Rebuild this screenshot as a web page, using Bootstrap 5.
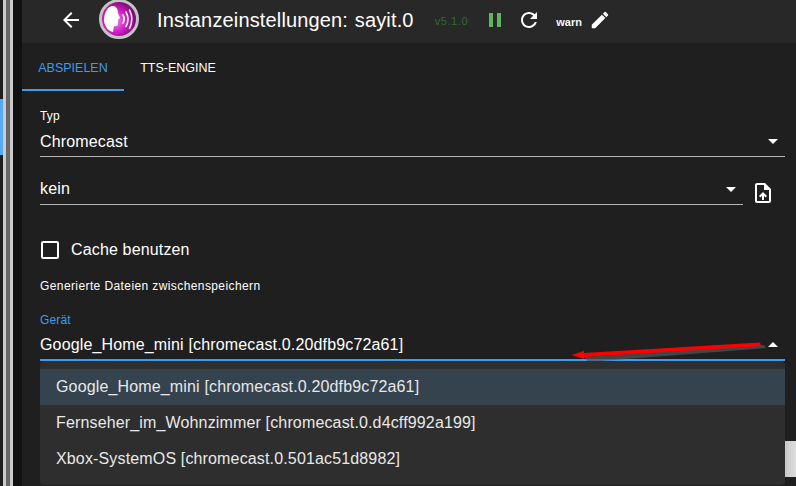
<!DOCTYPE html>
<html lang="de">
<head>
  <meta charset="UTF-8" />
  <title>Instanzeinstellungen: sayit.0</title>
  <link href="https://cdn.jsdelivr.net/npm/bootstrap@5.3.0/dist/css/bootstrap.min.css" rel="stylesheet" />
  <style>
    html, body { height: 100%; overflow: hidden; }
    body { background: #1f1f1f; color: #fff; font-family: "Liberation Sans", Arial, sans-serif; font-size: 16px; letter-spacing: .15px; }

    /* window strip on the left */
    .edge-strip { width: 22px; flex: none; display: flex; }
    .edge-a { width: 3px; background: #1e1e1e; padding-top: 99px; }
    .edge-a i { display: block; height: 56px; background: #55a9f2; }
    .edge-b { width: 3px; background: #cbcbcb; }
    .edge-c { width: 4px; background: #666; }
    .edge-d { width: 9px; background: #111; }

    .top-bar { height: 43px; background: #282828; padding: 0 0 3px 41px; }
    .top-title { font-size: 20px; letter-spacing: .15px; word-spacing: 1px; margin-left: 17px; white-space: nowrap; }
    .top-version { font-size: 11px; letter-spacing: .6px; color: #2f6b2f; margin-left: 21px; margin-top: 3px; }
    .top-warn { font-size: 11px; font-weight: 700; letter-spacing: 0; margin-left: 15px; margin-top: 4px; color: #f4f8ff; }
    .logo-box { width: 42px; height: 42px; margin-left: 19px; margin-top: -3px; flex: none; }
    .pause-ico { margin-left: 15px; }
    .reload-ico { margin-left: 10px; }
    .edit-ico { margin-left: 7px; }

    .tab-bar { height: 48px; }
    .tab-item { width: 102px; height: 48px; line-height: 51px; font-size: 12.5px; letter-spacing: 0; text-align: center; color: #fff; text-decoration: none; border-bottom: 2px solid transparent; }
    .tab-item.is-on { color: #3f9ce8; border-bottom-color: #3f9ce8; }
    .tab-item + .tab-item { width: 108px; }

    .form-area { padding: 18px 0 0 18px; }
    .fld-label { font-size: 12px; line-height: 14px; display: block; }
    .fld-label.is-on { color: #3f9ce8; }
    .fld-sel { height: 34px; display: flex; align-items: center; justify-content: space-between; border-bottom: 1px solid #b5b5b5; padding: 4px 7px 0 0; }
    .fld-sel.is-on { border-bottom: 2px solid #3f9ce8; height: 34px; padding-top: 3px; }
    .fld-sel.is-short { height: 33px; padding-top: 2px; }
    .tri { width: 0; height: 0; border-left: 5px solid transparent; border-right: 5px solid transparent; border-top: 5px solid #fff; }
    .tri.up { border-top: 0; border-bottom: 5px solid #fff; }
    .kein-row { margin-top: 15px; }
    .upload-ico { margin: 9px 10px 0 8px; flex: none; }
    .cache-row { margin-top: 33px; }
    .cache-box { width: 18px; height: 18px; border: 2px solid #fff; border-radius: 2px; margin: 0 12px 0 1px; }
    .help-line { font-size: 12px; letter-spacing: .4px; margin-top: 15px; }
    .device-fld { margin-top: 18px; }

    .menu-box { --bs-dropdown-bg: #2e2e2e; --bs-dropdown-border-width: 0; --bs-dropdown-border-radius: 4px; --bs-dropdown-padding-y: 8px; --bs-dropdown-link-color: #e8e8e8; top: 100%; left: 0; right: 0; }
    .menu-box .dropdown-item { height: 36px; line-height: 36px; padding: 0 16px; font-size: 16px; letter-spacing: .15px; }
    .menu-box .dropdown-item.is-picked { background: #35434f; }

    .side-gap { width: 11px; flex: none; padding-top: 350px; }
    .side-gap i { display: block; height: 36px; background: linear-gradient(90deg, #c8c8c8, #ddd); }

    .red-arrow { position: absolute; left: 0; top: 0; pointer-events: none; }
  </style>
</head>
<body>
  <div class="d-flex h-100">
    <div class="edge-strip">
      <div class="edge-a"><i></i></div>
      <div class="edge-b"></div>
      <div class="edge-c"></div>
      <div class="edge-b"></div>
      <div class="edge-d"></div>
    </div>
    <div class="flex-grow-1">
      <!-- header -->
      <div class="top-bar d-flex align-items-center">
        <svg width="16" height="16" viewBox="4 4 16 16" fill="#fff"><path d="M20 11H7.83l5.59-5.59L12 4l-8 8 8 8 1.41-1.41L7.83 13H20v-2z"/></svg>
        <svg class="logo-box" viewBox="0 0 42 42">
          <defs>
            <radialGradient id="orb" cx="40%" cy="55%" r="62%">
              <stop offset="0" stop-color="#f08ae8"/>
              <stop offset=".5" stop-color="#d21cc6"/>
              <stop offset="1" stop-color="#5f0a5a"/>
            </radialGradient>
          </defs>
          <circle cx="21" cy="21" r="18.5" fill="url(#orb)" stroke="#c4c4c4" stroke-width="3"/>
          <path d="M6 23C6 14 10 8 15 8C18 8 20 11 20 15L22 20L20 21.5L20 26C20 28 18 28.500 16 28L15 34C10 33 7 29 6 23Z" fill="#fff"/>
          <g fill="none" stroke="#fff" stroke-linecap="round">
            <path d="M25 17c1.500 2.500 1.500 5.500 0 8" stroke-width="1.600"/>
            <path d="M28 14c2.500 4.500 2.500 10 0 14.500" stroke-width="1.600"/>
            <path d="M31.500 12c3 6 3 12.500 0 18.500" stroke-width="1.500"/>
          </g>
        </svg>
        <span class="top-title">Instanzeinstellungen: sayit.0</span>
        <span class="top-version">v5.1.0</span>
        <svg class="pause-ico" width="24" height="24" viewBox="0 0 24 24" fill="#5cb85c"><path d="M6 19h4V5H6v14zm8-14v14h4V5h-4z"/></svg>
        <svg class="reload-ico" width="24" height="24" viewBox="0 0 24 24" fill="#fff"><path d="M17.65 6.35C16.2 4.9 14.21 4 12 4c-4.42 0-7.99 3.58-7.99 8s3.57 8 7.99 8c3.73 0 6.84-2.55 7.73-6h-2.08c-.82 2.33-3.04 4-5.65 4-3.31 0-6-2.69-6-6s2.69-6 6-6c1.66 0 3.14.69 4.22 1.78L13 11h7V4l-2.35 2.35z"/></svg>
        <span class="top-warn">warn</span>
        <svg class="edit-ico" width="22" height="22" viewBox="0 0 24 24" fill="#fff"><path d="M3 17.25V21h3.75L17.81 9.94l-3.75-3.75L3 17.25zM20.71 7.04c.39-.39.39-1.02 0-1.41l-2.34-2.34c-.39-.39-1.02-.39-1.41 0l-1.83 1.83 3.75 3.75 1.83-1.83z"/></svg>
      </div>

      <!-- tabs -->
      <div class="tab-bar d-flex">
        <a class="tab-item is-on" href="#">ABSPIELEN</a>
        <a class="tab-item" href="#">TTS-ENGINE</a>
      </div>

      <div class="d-flex">
        <div class="form-area flex-grow-1">
          <label class="fld-label">Typ</label>
          <div class="fld-sel"><span>Chromecast</span><span class="tri"></span></div>

          <div class="kein-row d-flex align-items-start">
            <div class="fld-sel is-short flex-grow-1"><span>kein</span><span class="tri"></span></div>
            <svg class="upload-ico" width="24" height="24" viewBox="0 0 24 24" fill="#fff"><path d="M14 2H6c-1.1 0-1.99.9-1.99 2L4 20c0 1.1.89 2 1.99 2H18c1.1 0 2-.9 2-2V8l-6-6zm4 18H6V4h7v5h5v11zM8 15.01l1.41 1.41L11 14.84V19h2v-4.16l1.59 1.59L16 15.01 12.01 11 8 15.01z"/></svg>
          </div>

          <div class="cache-row d-flex align-items-center">
            <span class="cache-box"></span><span>Cache benutzen</span>
          </div>
          <div class="help-line">Generierte Dateien zwischenspeichern</div>

          <div class="device-fld position-relative">
            <label class="fld-label is-on">Gerät</label>
            <div class="fld-sel is-on"><span>Google_Home_mini [chromecast.0.20dfb9c72a61]</span><span class="tri up"></span></div>
            <ul class="dropdown-menu show menu-box w-100 mt-0">
              <li><a class="dropdown-item is-picked" href="#">Google_Home_mini [chromecast.0.20dfb9c72a61]</a></li>
              <li><a class="dropdown-item" href="#">Fernseher_im_Wohnzimmer [chromecast.0.d4cff992a199]</a></li>
              <li><a class="dropdown-item" href="#">Xbox-SystemOS [chromecast.0.501ac51d8982]</a></li>
            </ul>
          </div>
        </div>
        <div class="side-gap"><i></i></div>
      </div>
    </div>
  </div>

  <!-- annotation arrow drawn over the screenshot -->
  <svg class="red-arrow" width="796" height="486" viewBox="0 0 796 486">
    <path d="M584 357L764 345L766 348L588 362Z" fill="#555" opacity=".7"/>
    <path d="M571.500 355L584 351L584 353L760 342.500L761 346L584 357L584 359Z" fill="#f00"/>
  </svg>

  <script src="https://cdn.jsdelivr.net/npm/bootstrap@5.3.0/dist/js/bootstrap.bundle.min.js"></script>
</body>
</html>
